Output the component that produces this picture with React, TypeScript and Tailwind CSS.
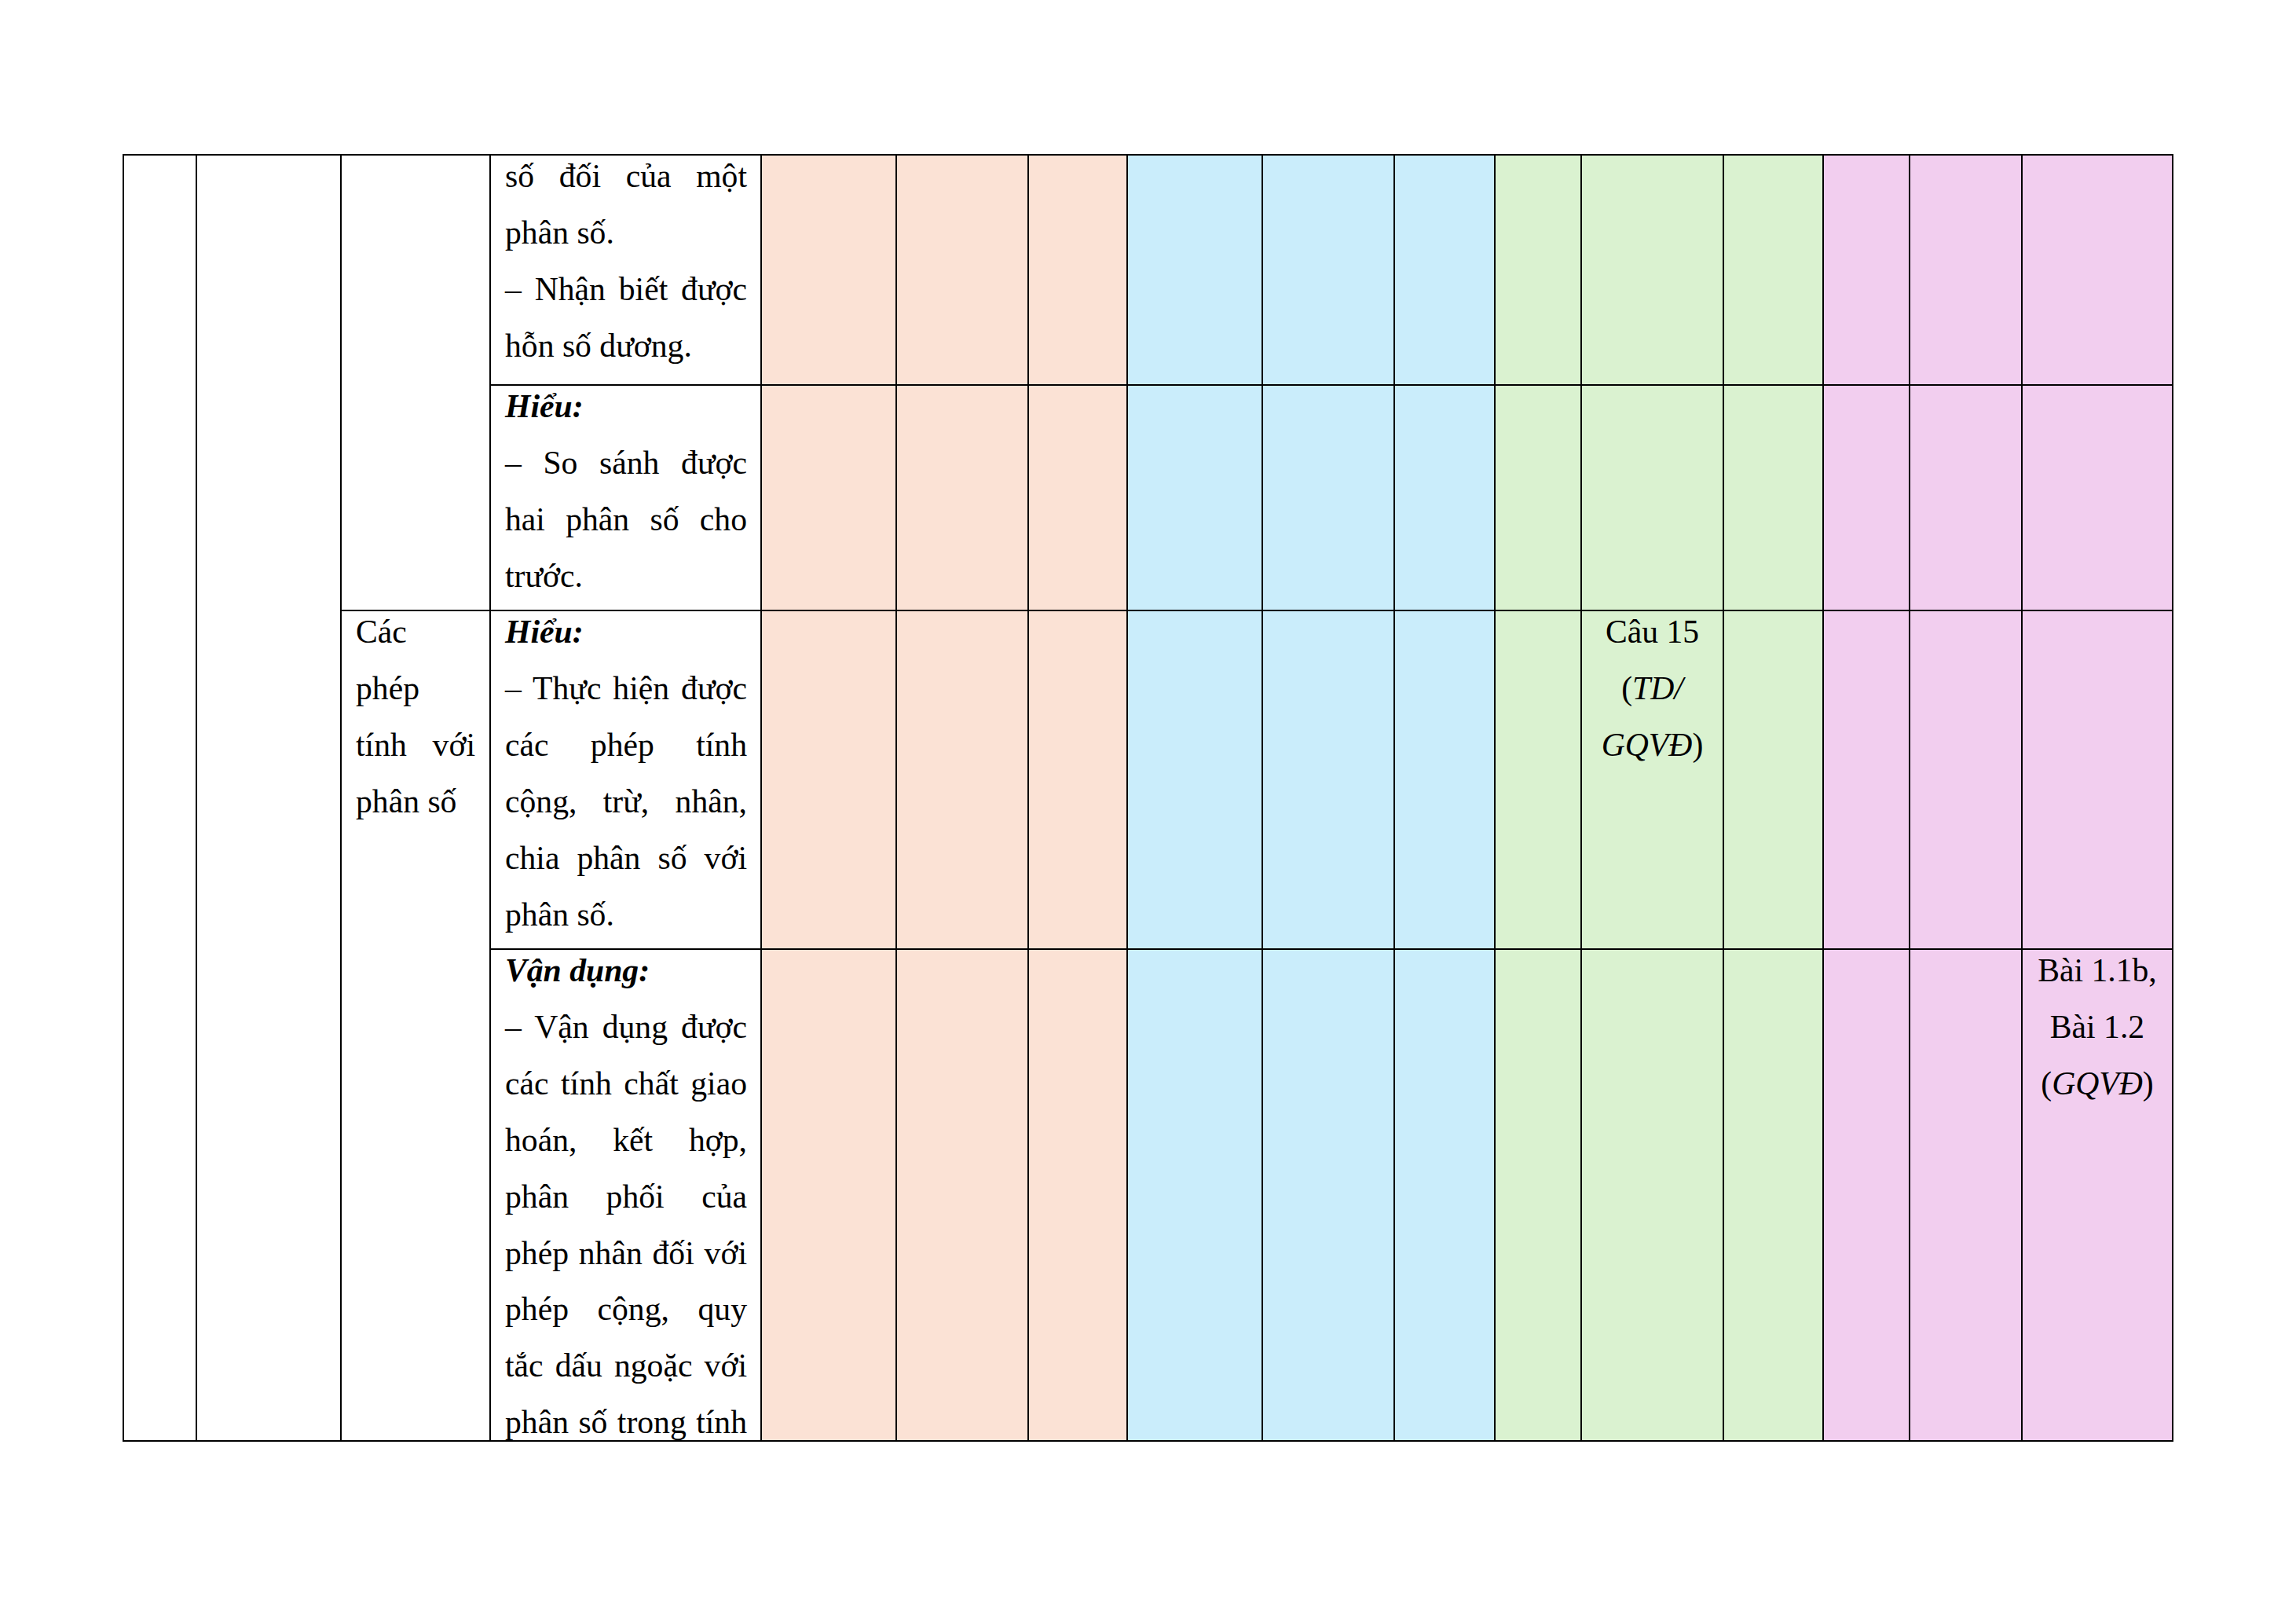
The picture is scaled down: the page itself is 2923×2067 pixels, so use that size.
import React from "react";

const cellBase = "border-r-2 border-b-2 border-black";

const rowBgs = [
  "bg-[#FBE2D5]",
  "bg-[#FBE2D5]",
  "bg-[#FBE2D5]",
  "bg-[#CAEDFB]",
  "bg-[#CAEDFB]",
  "bg-[#CAEDFB]",
  "bg-[#DAF2D0]",
  "bg-[#DAF2D0]",
  "bg-[#DAF2D0]",
  "bg-[#F2CEEF]",
  "bg-[#F2CEEF]",
  "bg-[#F2CEEF]",
];

function J({ children }: { children: React.ReactNode }) {
  return <div className="text-justify [text-align-last:justify] whitespace-nowrap">{children}</div>;
}
function E({ children }: { children: React.ReactNode }) {
  return <div className="text-left whitespace-nowrap">{children}</div>;
}

function TextCell({ children, extra = "" }: { children: React.ReactNode; extra?: string }) {
  return (
    <div className={`${cellBase} ${extra} overflow-hidden pl-[18px] pr-[17px]`}>
      <div className="-mt-[9px]">{children}</div>
    </div>
  );
}

function ColorCells({ content }: { content?: Record<number, React.ReactNode> }) {
  return (
    <>
      {rowBgs.map((bg, i) => (
        <div key={i} className={`${cellBase} ${bg} overflow-hidden`}>
          {content && content[i] ? (
            <div className="-mt-[9px] text-center whitespace-nowrap">{content[i]}</div>
          ) : null}
        </div>
      ))}
    </>
  );
}

export default function App() {
  return (
    <div className="w-[2923px] h-[2067px] bg-white pt-[196px] pl-[156px] font-['Liberation_Serif',serif] text-[41.67px] leading-[71.9px] text-black">
      <div className="grid w-max grid-cols-[93px_184px_190px_345px_172px_168px_126px_172px_168px_128px_110px_181px_127px_110px_143px_192px] grid-rows-[293px_287px_431px_626px] border-l-2 border-t-2 border-black">
        {/* Row 1 */}
        <div className={`${cellBase} row-span-4`} />
        <div className={`${cellBase} row-span-4`} />
        <div className={`${cellBase} row-span-2`} />
        <TextCell>
          <J>số đối của một</J>
          <E>phân số.</E>
          <J>– Nhận biết được</J>
          <E>hỗn số dương.</E>
        </TextCell>
        <ColorCells />

        {/* Row 2 */}
        <TextCell>
          <E>
            <span className="font-bold italic">Hiểu:</span>
          </E>
          <J>– So sánh được</J>
          <J>hai phân số cho</J>
          <E>trước.</E>
        </TextCell>
        <ColorCells />

        {/* Row 3 */}
        <div className={`${cellBase} row-span-2 overflow-hidden pl-[18px] pr-[18px]`}>
          <div className="-mt-[9px]">
            <E>Các</E>
            <E>phép</E>
            <J>tính với</J>
            <E>phân số</E>
          </div>
        </div>
        <TextCell>
          <E>
            <span className="font-bold italic">Hiểu:</span>
          </E>
          <J>– Thực hiện được</J>
          <J>các phép tính</J>
          <J>cộng, trừ, nhân,</J>
          <J>chia phân số với</J>
          <E>phân số.</E>
        </TextCell>
        <ColorCells
          content={{
            7: (
              <>
                <div>Câu 15</div>
                <div>
                  (<span className="italic">TD/</span>
                </div>
                <div>
                  <span className="italic">GQVĐ</span>)
                </div>
              </>
            ),
          }}
        />

        {/* Row 4 */}
        <TextCell>
          <E>
            <span className="font-bold italic">Vận dụng:</span>
          </E>
          <J>– Vận dụng được</J>
          <J>các tính chất giao</J>
          <J>hoán, kết hợp,</J>
          <J>phân phối của</J>
          <J>phép nhân đối với</J>
          <J>phép cộng, quy</J>
          <J>tắc dấu ngoặc với</J>
          <J>phân số trong tính</J>
        </TextCell>
        <ColorCells
          content={{
            11: (
              <>
                <div>Bài 1.1b,</div>
                <div>Bài 1.2</div>
                <div>
                  (<span className="italic">GQVĐ</span>)
                </div>
              </>
            ),
          }}
        />
      </div>
    </div>
  );
}
